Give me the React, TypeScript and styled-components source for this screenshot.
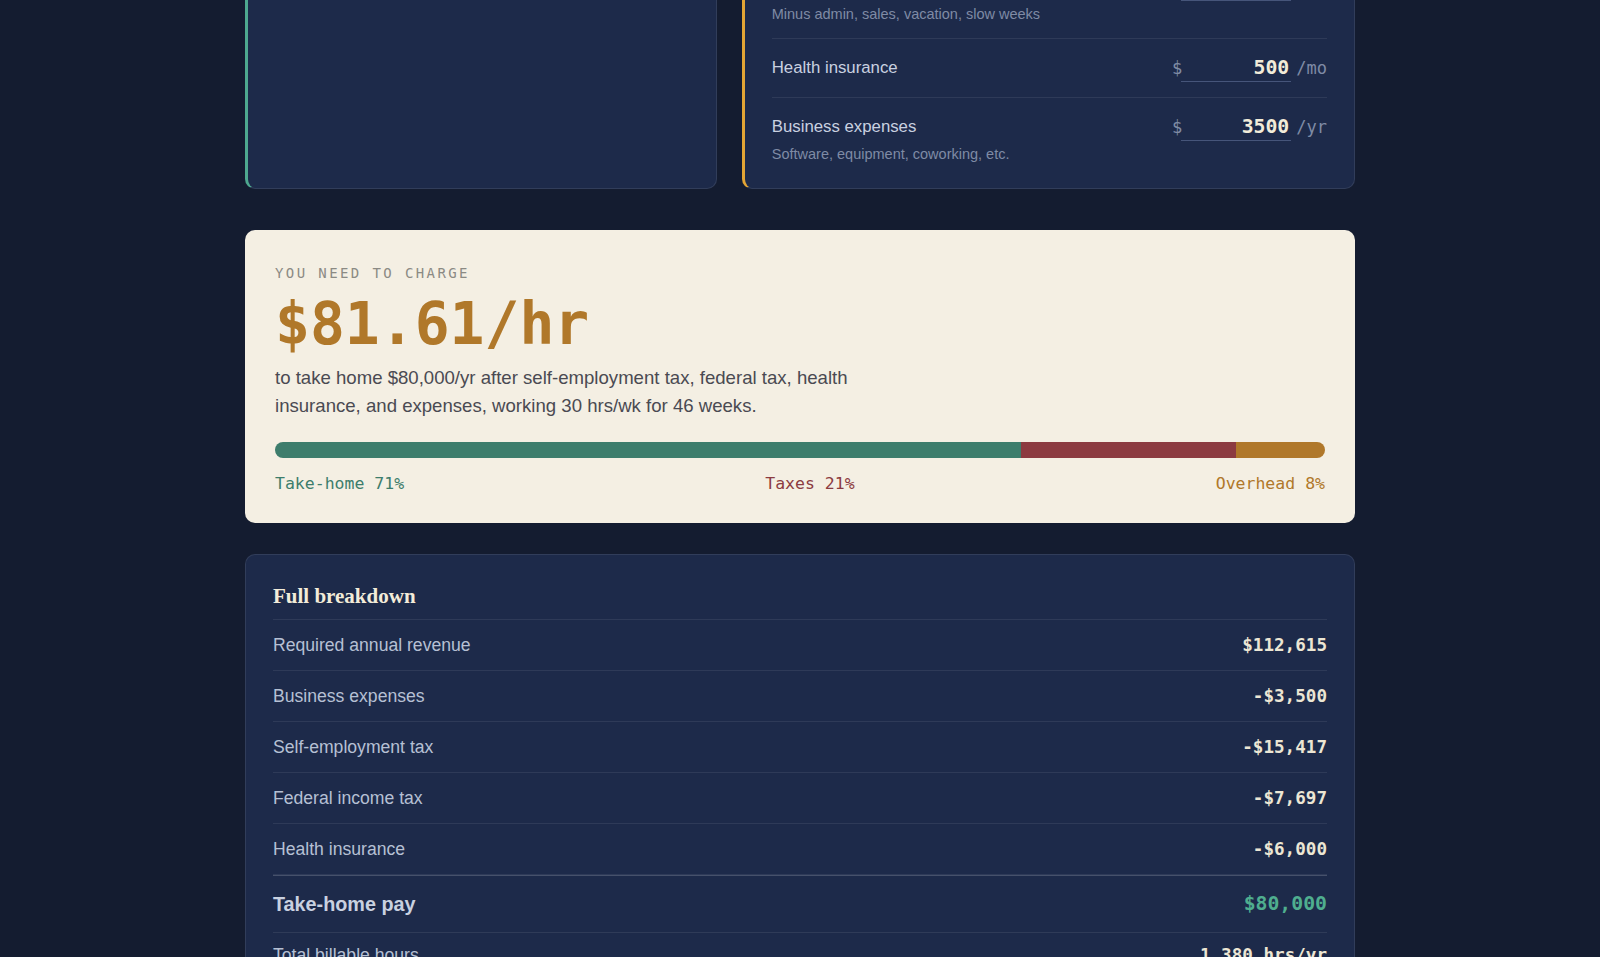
import styled, { createGlobalStyle } from "styled-components";

const MONO = `"DejaVu Sans Mono", "Liberation Mono", monospace`;
const SERIF = `"Liberation Serif", "Times New Roman", serif`;

const GlobalStyle = createGlobalStyle`
    html, body {
        margin: 0;
        padding: 0;
        overflow: hidden;
    }
    body {
        background: #141c30;
        font-family: "Liberation Sans", Arial, sans-serif;
        color: #c9d1e0;
    }
`;

const Page = styled.main`
    max-width: 1110px;
    margin: -162px auto 0;
    padding-bottom: 80px;
`;

const InputGrid = styled.section`
    display: grid;
    grid-template-columns: 1fr 1.3fr;
    gap: 25px;
    align-items: stretch;
`;

const Panel = styled.div<{ $accent: string }>`
    background: #1d2a4a;
    border: 1px solid rgba(255, 255, 255, 0.09);
    border-left: 3px solid ${(p) => p.$accent};
    border-radius: 10px;
    padding: 28px 27px 10px 27px;
`;

const PanelTitle = styled.h3`
    margin: 0 0 6px;
    font-family: ${SERIF};
    font-size: 21px;
    line-height: 26px;
    color: #f3ecd9;
`;

const Field = styled.div`
    display: flex;
    justify-content: space-between;
    align-items: flex-start;
    padding: 15px 0;

    & + & {
        border-top: 1px solid rgba(255, 255, 255, 0.08);
    }
`;

const FieldText = styled.div`
    display: flex;
    flex-direction: column;
`;

const FieldLabel = styled.label`
    font-size: 16.8px;
    line-height: 28px;
    color: #c9d1e0;
`;

const FieldHint = styled.span`
    margin-top: 4px;
    font-size: 14.5px;
    line-height: 18px;
    color: #7f8ba5;
`;

const InputGroup = styled.div`
    display: flex;
    align-items: center;
    gap: 5px;
    height: 28px;
`;

const Affix = styled.span<{ $prefix?: boolean }>`
    margin-right: ${(p) => (p.$prefix ? "-6px" : "0")};
    font-family: ${MONO};
    font-size: 17px;
    color: #7f8ba5;
`;

const NumberInput = styled.input`
    box-sizing: border-box;
    width: 110px;
    height: 28px;
    padding: 0 2px;
    background: transparent;
    border: none;
    border-bottom: 1px solid #46557a;
    color: #f2ecd9;
    font-family: ${MONO};
    font-size: 19.8px;
    font-weight: 700;
    text-align: right;
    outline: none;
`;

const ResultCard = styled.section`
    margin: 41px 0 31px;
    background: #f4efe3;
    border-radius: 10px;
    padding: 32px 30px 29px;
    color: #4a4a52;
`;

const Eyebrow = styled.div`
    font-family: ${MONO};
    font-size: 14px;
    line-height: 22px;
    letter-spacing: 2.4px;
    text-transform: uppercase;
    color: #8b8a84;
`;

const Rate = styled.div`
    margin-top: 10px;
    font-family: ${MONO};
    font-size: 58px;
    font-weight: 700;
    line-height: 60px;
    color: #b0782a;
`;

const Summary = styled.p`
    margin: 10px 0 0;
    max-width: 620px;
    font-size: 18.6px;
    line-height: 27.5px;
`;

const Bar = styled.div`
    display: flex;
    height: 16px;
    margin-top: 23px;
    border-radius: 8px;
    overflow: hidden;
`;

const Segment = styled.div<{ $color: string }>`
    height: 100%;
    background: ${(p) => p.$color};
`;

const Legend = styled.div`
    display: flex;
    justify-content: space-between;
    margin-top: 16px;
    font-family: ${MONO};
    font-size: 16.5px;
    line-height: 20px;
`;

const LegendItem = styled.span<{ $color: string }>`
    color: ${(p) => p.$color};
`;

const Breakdown = styled.section`
    background: #1d2a4a;
    border: 1px solid rgba(255, 255, 255, 0.09);
    border-radius: 10px;
    padding: 28px 27px;
`;

const BreakdownTitle = styled.h2`
    margin: 0;
    padding-bottom: 10px;
    border-bottom: 1px solid rgba(255, 255, 255, 0.08);
    font-family: ${SERIF};
    font-size: 21px;
    line-height: 26px;
    color: #f3ecd9;
`;

const Line = styled.div<{ $total?: boolean; $muted?: boolean }>`
    display: flex;
    justify-content: space-between;
    align-items: center;
    padding: ${(p) => (p.$total ? "17px 0" : p.$muted ? "12px 0" : "15px 0")};
    border-top: ${(p) => (p.$total ? "1px solid rgba(255, 255, 255, 0.18)" : "none")};
    border-bottom: 1px solid rgba(255, 255, 255, 0.08);
    font-size: ${(p) => (p.$total ? "19.8px" : "17.6px")};
    font-weight: ${(p) => (p.$total ? 700 : 400)};
    line-height: ${(p) => (p.$total ? "22px" : "20px")};
    color: ${(p) => (p.$total ? "#c9d1e0" : "#b6c0d4")};
`;

const LineValue = styled.span<{ $total?: boolean }>`
    font-family: ${MONO};
    font-weight: 700;
    color: ${(p) => (p.$total ? "#4fae8f" : "#ece6d4")};
`;

type FieldDef = {
    label: string;
    hint?: string;
    prefix?: string;
    value: string;
    suffix: string;
};

const costFields: FieldDef[] = [
    { label: "Billable hours per week", value: "30", suffix: "hrs" },
    { label: "Working weeks per year", hint: "Minus admin, sales, vacation, slow weeks", value: "46", suffix: "wks" },
    { label: "Health insurance", prefix: "$", value: "500", suffix: "/mo" },
    { label: "Business expenses", hint: "Software, equipment, coworking, etc.", prefix: "$", value: "3500", suffix: "/yr" },
];

const goalFields: FieldDef[] = [
    { label: "Take-home pay", hint: "What you want to keep", prefix: "$", value: "80000", suffix: "/yr" },
];

const split = [
    { label: "Take-home", pct: 71.04, color: "#3d7d6c" },
    { label: "Taxes", pct: 20.52, color: "#8c3b41" },
    { label: "Overhead", pct: 8.44, color: "#b0782a" },
];

const lines = [
    { label: "Required annual revenue", value: "$112,615" },
    { label: "Business expenses", value: "-$3,500" },
    { label: "Self-employment tax", value: "-$15,417" },
    { label: "Federal income tax", value: "-$7,697" },
    { label: "Health insurance", value: "-$6,000" },
];

const FieldRow = ({ f }: { f: FieldDef }) => (
    <Field>
        <FieldText>
            <FieldLabel>{f.label}</FieldLabel>
            {f.hint && <FieldHint>{f.hint}</FieldHint>}
        </FieldText>
        <InputGroup>
            {f.prefix && <Affix $prefix>{f.prefix}</Affix>}
            <NumberInput type="text" defaultValue={f.value} />
            <Affix>{f.suffix}</Affix>
        </InputGroup>
    </Field>
);

const App = () => {
    return (
        <Page>
            <GlobalStyle />
            <InputGrid>
                <Panel $accent="#4ea88f">
                    <PanelTitle>Your goal</PanelTitle>
                    {goalFields.map((f) => (
                        <FieldRow key={f.label} f={f} />
                    ))}
                </Panel>
                <Panel $accent="#e3a535">
                    <PanelTitle>Your reality</PanelTitle>
                    {costFields.map((f) => (
                        <FieldRow key={f.label} f={f} />
                    ))}
                </Panel>
            </InputGrid>

            <ResultCard>
                <Eyebrow>You need to charge</Eyebrow>
                <Rate>$81.61/hr</Rate>
                <Summary>
                    to take home $80,000/yr after self-employment tax, federal tax, health insurance, and
                    expenses, working 30 hrs/wk for 46 weeks.
                </Summary>
                <Bar>
                    {split.map((s) => (
                        <Segment key={s.label} $color={s.color} style={{ width: `${s.pct}%` }} />
                    ))}
                </Bar>
                <Legend>
                    {split.map((s) => (
                        <LegendItem key={s.label} $color={s.color}>
                            {s.label} {Math.round(s.pct)}%
                        </LegendItem>
                    ))}
                </Legend>
            </ResultCard>

            <Breakdown>
                <BreakdownTitle>Full breakdown</BreakdownTitle>
                {lines.map((l) => (
                    <Line key={l.label}>
                        <span>{l.label}</span>
                        <LineValue>{l.value}</LineValue>
                    </Line>
                ))}
                <Line $total>
                    <span>Take-home pay</span>
                    <LineValue $total>$80,000</LineValue>
                </Line>
                <Line $muted>
                    <span>Total billable hours</span>
                    <LineValue>1,380 hrs/yr</LineValue>
                </Line>
                <Line $muted>
                    <span>Effective hourly take-home</span>
                    <LineValue>$57.97/hr</LineValue>
                </Line>
            </Breakdown>
        </Page>
    );
};

export default App;
